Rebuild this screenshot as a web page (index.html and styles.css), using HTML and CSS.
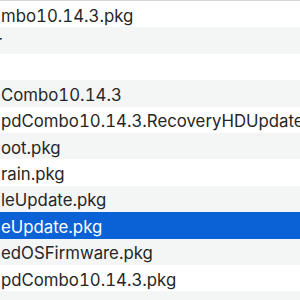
FILE: index.html
```html
<!DOCTYPE html>
<html>
<head>
<meta charset="utf-8">
<link rel="stylesheet" href="styles.css">
</head>
<body>
<div class="list">
  <div class="row"><span class="name first">mbo10.14.3.pkg</span></div>
  <div class="row alt"><span class="name tail">Installer</span></div>
  <div class="row"><span class="name"></span></div>
  <div class="row alt"><span class="name">Combo10.14.3</span></div>
  <div class="row"><span class="name">pdCombo10.14.3.RecoveryHDUpdate.pkg</span></div>
  <div class="row alt"><span class="name">oot.pkg</span></div>
  <div class="row"><span class="name">rain.pkg</span></div>
  <div class="row alt"><span class="name">leUpdate.pkg</span></div>
  <div class="row selected"><span class="name">eUpdate.pkg</span></div>
  <div class="row alt"><span class="name">edOSFirmware.pkg</span></div>
  <div class="row"><span class="name">pdCombo10.14.3.pkg</span></div>
  <div class="row alt"><span class="name"></span></div>
</div>
</body>
</html>
```

FILE: styles.css
```css
html, body {
  margin: 0;
  padding: 0;
  background: #ffffff;
}

.list {
  width: 300px;
  height: 300px;
  overflow: hidden;
  border-top: 1px solid #d6d6d6;
  box-sizing: border-box;
  display: flex;
  flex-direction: column;
}

.row {
  flex: none;
  height: 26.4px;
  display: flex;
  align-items: center;
  padding-left: 1px;
  padding-top: 3px;
  box-sizing: border-box;
  overflow: hidden;
  white-space: nowrap;
  background: #ffffff;
  color: #262626;
  font-family: "Inter", "Noto Sans", sans-serif;
  font-size: 16.8px;
  font-variant-numeric: tabular-nums;
}

.row.alt {
  background: #f4f5f5;
}

.row.selected {
  background: #0b62d6;
  color: #ffffff;
}

.name {
  display: block;
}

.name.tail {
  width: 2px;
  margin-left: -1px;
  overflow: hidden;
  direction: rtl;
}
```
